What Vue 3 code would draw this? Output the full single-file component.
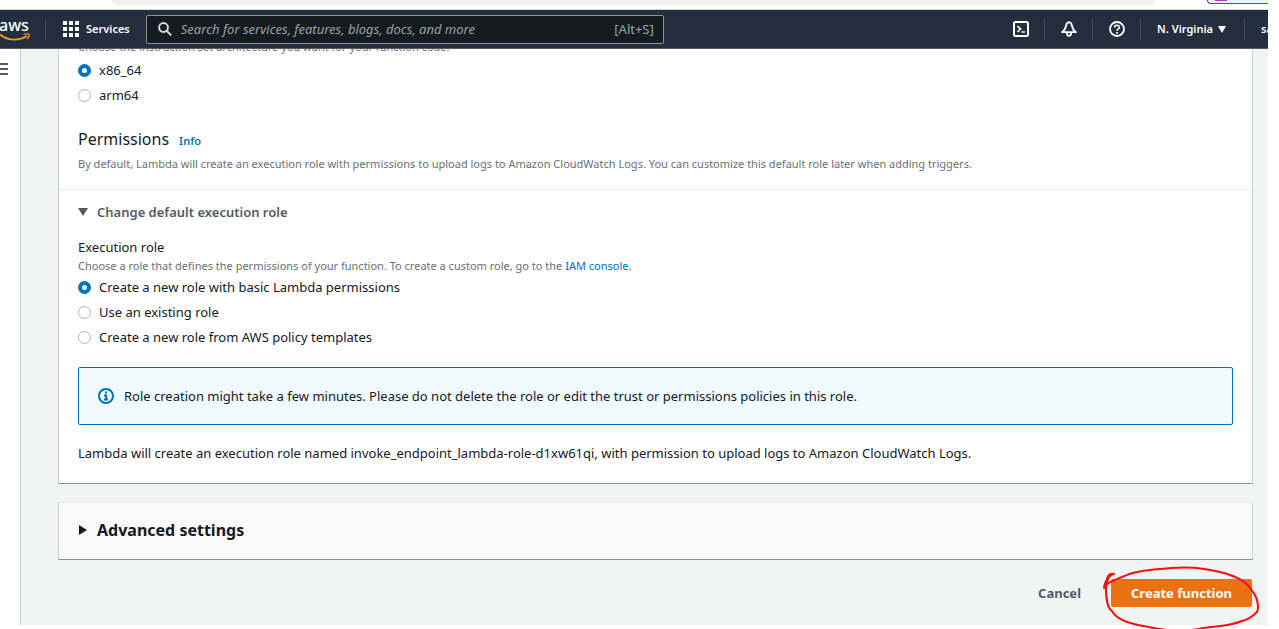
<script setup>
import { ref } from 'vue'

const architecture = ref('x86_64')
const architectures = ['x86_64', 'arm64']
const role = ref('basic')
const roles = [
  { value: 'basic', label: 'Create a new role with basic Lambda permissions' },
  { value: 'existing', label: 'Use an existing role' },
  { value: 'template', label: 'Create a new role from AWS policy templates' },
]
const search = ref('')
</script>

<template>
  <div class="page">
    <div class="browser">
      <div class="address"></div>
      <div class="profile"><span class="avatar"></span></div>
    </div>

    <header class="topbar">
      <a class="logo" href="#" aria-label="aws">
        <span class="logo-text">aws</span>
        <svg class="smile" width="32" height="8" viewBox="0 0 32 8" fill="none" stroke="#f7981f">
          <path d="M0 1.5C8 7.5 18 8.5 27 3" stroke-width="2" />
          <path d="M23.5 1.5C26 .7 28 .6 29 1.3C29.4 2.5 28.7 4.5 27.3 6" stroke-width="1.3" />
        </svg>
      </a>
      <span class="rule"></span>
      <button class="services" type="button">
        <svg width="16" height="16" viewBox="0 0 16 16" fill="#fff">
          <path d="M0 0h4v4H0zM6 0h4v4H6zM12 0h4v4h-4zM0 6h4v4H0zM6 6h4v4H6zM12 6h4v4h-4zM0 12h4v4H0zM6 12h4v4H6zM12 12h4v4h-4z" />
        </svg>
        <span>Services</span>
      </button>
      <label class="search">
        <svg width="14" height="14" viewBox="0 0 14 14" fill="none" stroke="#d5dbdb" stroke-width="2">
          <circle cx="5.5" cy="5.5" r="4.4" />
          <path d="M8.7 8.7L13.2 13.4" />
        </svg>
        <input v-model="search" type="text" aria-label="Search" placeholder="Search for services, features, blogs, docs, and more" />
        <span class="shortcut">[Alt+S]</span>
      </label>
      <nav class="tools">
        <button class="tool" type="button" aria-label="CloudShell">
          <svg width="16" height="16" viewBox="0 0 16 16" fill="none" stroke="#fff" stroke-width="2">
            <rect x="1" y="1" width="14" height="14" rx="1.5" />
            <path d="M4.5 5L7.5 8L4.5 11" stroke-width="1.7" />
            <path d="M8.5 11h3.5" stroke-width="1.5" />
          </svg>
        </button>
        <button class="tool" type="button" aria-label="Notifications">
          <svg width="16" height="16" viewBox="0 0 16 16" fill="none" stroke="#fff" stroke-width="1.8" stroke-linejoin="round">
            <path d="M8 1.2C6.4 1.4 5.4 2.8 5 5C4.5 8 3.4 9.4 1.2 11.2H14.8C12.6 9.4 11.5 8 11 5C10.6 2.8 9.6 1.4 8 1.2Z" />
            <path d="M5.8 11.8C5.9 15.8 10.1 15.8 10.2 11.8" />
          </svg>
        </button>
        <button class="tool" type="button" aria-label="Help">
          <svg width="16" height="16" viewBox="0 0 16 16" fill="none" stroke="#fff" stroke-width="1.8">
            <circle cx="8" cy="8" r="7" />
            <path d="M5.6 6.5C5.6 3.5 10.4 3.5 10.4 6.3C10.4 8 8 7.9 8 9.8" stroke-width="1.6" />
            <path d="M8 11v1.8" />
          </svg>
        </button>
        <button class="region" type="button">
          <span>N. Virginia</span>
          <svg width="8" height="7" viewBox="0 0 8 7" fill="#fff"><path d="M0 0h8L4 7z" /></svg>
        </button>
        <button class="account" type="button">sa</button>
      </nav>
    </header>

    <div class="body">
      <aside class="side">
        <button class="menu" type="button" aria-label="Open navigation">
          <svg width="8" height="12" viewBox="0 0 8 12" fill="#545b64"><path d="M0 0h8v2H0zM0 5h8v2H0zM0 10h8v2H0z" /></svg>
        </button>
      </aside>
      <main class="content">
        <section class="card basic">
          <div class="top">
            <p class="hint">Choose the instruction set architecture you want for your function code.</p>
            <div class="radios">
              <label v-for="a in architectures" :key="a">
                <input v-model="architecture" type="radio" name="architecture" :value="a" />{{ a }}
              </label>
            </div>
            <div class="heading">
              <h2>Permissions</h2>
              <a href="#">Info</a>
            </div>
            <p class="hint">By default, Lambda will create an execution role with permissions to upload logs to Amazon CloudWatch Logs. You can customize this default role later when adding triggers.</p>
          </div>
          <div class="execution">
            <button class="expander" type="button" aria-expanded="true">
              <svg width="10" height="8" viewBox="0 0 10 8" fill="#545b64"><path d="M0 0h10L5 8z" /></svg>
              Change default execution role
            </button>
            <h3>Execution role</h3>
            <p class="hint">Choose a role that defines the permissions of your function. To create a custom role, go to the <a href="#">IAM console</a>.</p>
            <div class="radios roles">
              <label v-for="r in roles" :key="r.value">
                <input v-model="role" type="radio" name="role" :value="r.value" />{{ r.label }}
              </label>
            </div>
            <div class="alert">
              <svg width="16" height="16" viewBox="0 0 16 16" fill="none" stroke="#0073bb" stroke-width="2">
                <circle cx="8" cy="8" r="7" />
                <path d="M7 4.5h2M6 7.5h2.2V11M6 11.5h4" />
              </svg>
              <span>Role creation might take a few minutes. Please do not delete the role or edit the trust or permissions policies in this role.</span>
            </div>
            <p class="summary">Lambda will create an execution role named invoke_endpoint_lambda-role-d1xw61qi, with permission to upload logs to Amazon CloudWatch Logs.</p>
          </div>
        </section>

        <section class="card">
          <button class="advanced" type="button" aria-expanded="false">
            <svg width="8" height="10" viewBox="0 0 8 10" fill="#16191f"><path d="M0 0L8 5L0 10z" /></svg>
            Advanced settings
          </button>
        </section>

        <div class="actions">
          <button class="cancel" type="button">Cancel</button>
          <div class="primary-wrap">
            <button class="primary" type="button">Create function</button>
            <svg class="scribble" width="156" height="66" viewBox="0 0 156 66" fill="none" stroke="#f90d0d" stroke-width="2" stroke-linecap="round" stroke-linejoin="round">
              <path d="M11 8C7 7 5 9 4 13C2 17 1 20 1 22C4 16 10 15 19 11C33 4 50 4 68 2C90 0 107 3 121 7C135 11 145 17 149 25C155 31 156 42 154 46C148 52 144 54 139 55C124 61 110 60 100 62C85 66 61 65 46 61C25 58 13 53 9 45C4 42 3 29 3 23C3 17 5 9 11 8" />
            </svg>
          </div>
        </div>
      </main>
    </div>
  </div>
</template>

<style>
body {
  background: #fff;
}
</style>

<style scoped>
* {
  box-sizing: border-box;
}
.page {
  display: flex;
  flex-direction: column;
  height: 100vh;
  padding: 0 11px 4px 0;
  overflow: hidden;
  font: 13px/20px "Noto Sans", "Open Sans", sans-serif;
  color: #16191f;
}
button {
  display: flex;
  align-items: center;
  margin: 0;
  padding: 0;
  border: 0;
  background: none;
  font: inherit;
  color: inherit;
  white-space: nowrap;
}
svg {
  display: block;
  flex: none;
}
h2,
h3,
p {
  margin: 0;
  font-weight: 400;
}
a {
  color: #0073bb;
  text-decoration: none;
}
.browser {
  display: flex;
  flex: none;
  justify-content: space-between;
  height: 10px;
  padding-left: 112px;
  border-bottom: 1px solid #d5d8dc;
  overflow: hidden;
}
.address {
  flex: 1;
  height: 5px;
  margin-right: 52px;
  border-radius: 0 0 16px 16px;
  background: #eeeff1;
}
.profile {
  width: 61px;
  height: 4px;
  border: solid #1b66c9;
  border-width: 0 0 1px 1px;
  border-radius: 0 0 0 12px;
  background: #eef1fb;
}
.avatar {
  display: block;
  width: 12px;
  height: 1px;
  margin-left: 7px;
  background: #a142c4;
}
.topbar {
  position: relative;
  z-index: 1;
  display: flex;
  flex: none;
  align-items: center;
  height: 39px;
  border-bottom: 1px solid #545b64;
  background: #232f3e;
  color: #fff;
  font-size: 11px;
}
.logo {
  width: 30px;
  color: #fff;
}
.logo-text {
  display: block;
  margin-left: -1px;
  font-size: 16px;
  font-weight: 500;
  line-height: 16px;
}
.rule {
  width: 1px;
  height: 21px;
  margin: 0 17px 0 15px;
  background: #414b57;
}
.services {
  gap: 7px;
  font-weight: 600;
}
.search {
  display: flex;
  align-items: center;
  width: 518px;
  height: 29px;
  margin-left: 16px;
  padding: 0 9px 0 11px;
  border: 1px solid #879596;
  border-radius: 2px;
  background: #161a21;
  color: #95a5a6;
  font-size: 13px;
}
.search input {
  flex: 1;
  min-width: 0;
  padding: 0 0 0 9px;
  border: 0;
  outline: 0;
  background: none;
  color: #fff;
  font: inherit;
}
.search input::placeholder {
  color: #95a5a6;
  font-style: italic;
  opacity: 1;
}
.tools {
  display: flex;
  align-items: center;
  margin-left: auto;
  font-weight: 600;
}
.tools button {
  height: 21px;
}
.tools .tool,
.tools .region {
  border-right: 1px solid #414b57;
}
.tool {
  justify-content: center;
  width: 48px;
}
.region {
  gap: 5px;
  padding: 0 18px 0 16px;
}
.account {
  width: 23px;
  padding-left: 16px;
  overflow: hidden;
}
.body {
  display: flex;
  flex: 1;
  min-height: 0;
}
.side {
  flex: none;
  width: 21px;
  padding-top: 14px;
  border-right: 1px solid #c5cccd;
  background: #fff;
}
.content {
  flex: 1;
  min-width: 0;
  padding: 0 15px 18px 37px;
  background: #f2f3f3;
}
.card {
  margin-bottom: 18px;
  border: 1px solid #c8cfd0;
  border-top-color: #eaeded;
  border-bottom-color: #879596;
  background: #fff;
}
.basic {
  margin-top: -14px;
}
.top {
  padding: 2px 19px 16px;
  border-bottom: 1px solid #eaeded;
}
.hint {
  color: #687078;
  font-size: 11px;
  line-height: 18px;
}
.radios {
  display: grid;
  gap: 5px;
  margin-top: 4px;
}
.roles {
  margin-top: 2px;
}
.radios label {
  display: flex;
  align-items: center;
  gap: 8px;
}
.radios input {
  appearance: none;
  width: 13px;
  height: 13px;
  margin: 0;
  border: 1px solid #aab7b8;
  border-radius: 50%;
  background: #fff;
}
.radios input:checked {
  border: 4px solid #0073bb;
}
.heading {
  display: flex;
  align-items: baseline;
  gap: 10px;
  margin: 23px 0 4px;
}
.heading h2 {
  font-size: 16px;
  line-height: 22px;
}
.heading a {
  font-size: 11px;
  font-weight: 600;
}
.execution {
  padding: 12px 19px 20px;
}
.expander {
  gap: 9px;
  color: #545b64;
  font-weight: 600;
}
.execution h3 {
  margin-top: 15px;
  font-size: 13px;
  line-height: 20px;
}
.alert {
  display: flex;
  align-items: center;
  gap: 10px;
  margin: 20px 0 18px;
  padding: 18px 19px;
  border: 1px solid #0073bb;
  border-radius: 2px;
  background: #f1faff;
}
.advanced {
  gap: 10px;
  width: 100%;
  padding: 16px 20px 18px;
  background: #fafafa;
  font-size: 16px;
  font-weight: 700;
  line-height: 22px;
}
.actions {
  display: flex;
  justify-content: flex-end;
  align-items: center;
  gap: 30px;
  padding: 1px 1px 0 0;
  font-weight: 700;
}
.cancel {
  color: #545b64;
}
.primary-wrap {
  position: relative;
}
.primary {
  padding: 4px 20px;
  border-radius: 2px;
  background: #ec7211;
  color: #fff;
}
.scribble {
  position: absolute;
  top: -13px;
  left: -8px;
  pointer-events: none;
}
</style>
